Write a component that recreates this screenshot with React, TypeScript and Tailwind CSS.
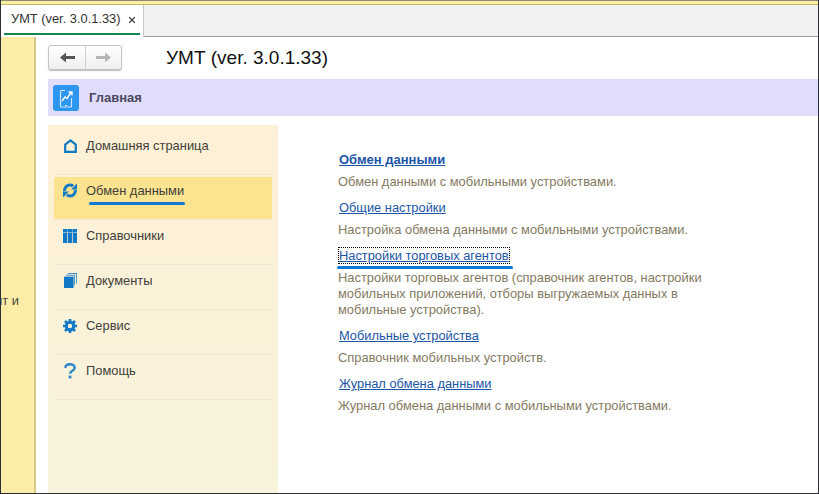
import { X } from 'lucide-react'

const menu = [
  { label: 'Домашняя страница', icon: <HomeIcon /> },
  { label: 'Обмен данными', icon: <SyncIcon />, active: true },
  { label: 'Справочники', icon: <TableIcon /> },
  { label: 'Документы', icon: <DocsIcon /> },
  { label: 'Сервис', icon: <GearIcon /> },
  { label: 'Помощь', icon: <HelpIcon /> },
]

function HomeIcon() {
  return (
    <svg width="13" height="14" viewBox="0 0 13 14" fill="none" stroke="#1279c6" strokeWidth="2.200">
      <path d="M1.200 12.800V5.600L6.500 1.400l5.300 4.200v7.200z" />
    </svg>
  )
}

function SyncIcon() {
  return (
    <svg width="14" height="15" viewBox="0 0 14 15" fill="none" stroke="#1279c6" strokeWidth="3">
      <path d="M1.700 8C1.300 4.500 3.800 2 7 2c1.300 0 2.300.4 3.100 1.100" />
      <path d="M12.300 7c.4 3.500-2.100 6-5.300 6-1.300 0-2.300-.4-3.100-1.100" />
      <path d="M8 6.500h6V.5z" fill="#1279c6" stroke="none" />
      <path d="M6 8.500H0v6z" fill="#1279c6" stroke="none" />
    </svg>
  )
}

function TableIcon() {
  return (
    <svg width="14" height="14" viewBox="0 0 14 14" fill="#1279c6">
      <path d="M0 0h14v3.400H0zM0 4h4.200v10H0zM4.900 4h4.200v10H4.900zM9.800 4H14v10H9.800z" />
      <path d="M4.200 0h.7v3.400h-.7zM9.100 0h.7v3.400h-.7z" fill="#7fb8e2" />
    </svg>
  )
}

function DocsIcon() {
  return (
    <svg width="13" height="15" viewBox="0 0 13 15" fill="#1279c6">
      <path d="M0 3.600h9.600V15H0z" />
      <path d="M2 1.800h9v10.400h-.7V2.500H2zM3.800 0H13v10.400h-.7V.7H3.800z" />
    </svg>
  )
}

function GearIcon() {
  return (
    <svg width="14" height="14" viewBox="0 0 14 14" fill="none" stroke="#1279c6">
      <circle cx="7" cy="7" r="3.700" strokeWidth="3" />
      <path d="M7 0v3M7 11v3M0 7h3M11 7h3M2 2l2 2M10 10l2 2M12 2l-2 2M4 10l-2 2" strokeWidth="2.700" />
    </svg>
  )
}

function HelpIcon() {
  return (
    <svg width="12" height="16" viewBox="0 0 12 16" fill="none" stroke="#2a86c8" strokeWidth="2.400">
      <path d="M1.300 4.800C1.500 2.600 3.500 1.300 6 1.300c2.700 0 4.700 1.400 4.700 3.400 0 3-4.700 2.900-4.700 6" />
      <path d="M4.700 12.600h2.700V15.400H4.700z" fill="#2a86c8" stroke="none" />
    </svg>
  )
}

function PhoneIcon() {
  return (
    <svg width="26" height="26" viewBox="0 0 26 26" className="rounded-[3px] bg-[#2c96f0]" fill="none" stroke="#cfe8ff" strokeWidth="1.200">
      <path d="M12 5.500H8.500a1 1 0 0 0-1 1V21a1 1 0 0 0 1 1h9a1 1 0 0 0 1-1v-8" />
      <path d="M9 16l3-4 2 1.500 4-6M15.500 7H19v3.500" strokeWidth="1.400" stroke="#fff" />
      <path d="M12 20.500h2" />
    </svg>
  )
}

function NavArrow({ color, flip }: { color: string; flip?: boolean }) {
  return (
    <svg width="15" height="11" viewBox="0 0 15 11" fill={color} className={flip ? 'rotate-180' : ''}>
      <path d="M0 5.500L6 .5v3.500h9v3H6v3.500z" />
    </svg>
  )
}

function DescLink({ title, bold, focus, children }: { title: string; bold?: boolean; focus?: boolean; children: string }) {
  return (
    <div>
      <div className="relative flex h-[19px] items-center">
        <a className={`ml-px leading-[15px] text-[#1c55a8] underline ${bold ? 'text-[13px] font-bold' : 'text-[12.85px]'} ${focus ? 'outline-1 outline-dotted outline-black' : ''}`}>
          {title}
        </a>
        {focus && <div className="absolute -left-px top-[20px] h-[3px] w-[176px] rounded-full bg-[#0f78d6]" />}
      </div>
      <p className="mt-[5px] text-[12.9px] leading-[16px] text-[#857a5f]">{children}</p>
    </div>
  )
}

export default function App() {
  return (
    <div className="flex h-[494px] w-[819px] flex-col overflow-hidden border-x border-b border-[#2c2f36] bg-white font-['Liberation_Sans',sans-serif]">
      <div className="h-[5px] shrink-0 border-t border-b border-t-[#8f8a6a] border-b-[#c9b865] bg-[#fbeea6]" />

      {/* Tabs */}
      <div className="flex h-[32px] shrink-0 border-b border-[#9a9a9a] bg-[#f1f1f1]">
        <div className="relative -mb-px flex w-[143px] shrink-0 items-center border-r border-[#c8c8c8] bg-white pb-[3px] pl-[10px]">
          <span className="text-[12.85px] leading-none text-[#333]">УМТ (ver. 3.0.1.33)</span>
          <X className="ml-[6px] h-[10px] w-[10px] text-[#444]" strokeWidth={3} />
          <div className="absolute bottom-[2px] left-[3px] h-[2px] w-[136px] bg-[#15874f]" />
        </div>
      </div>

      <div className="flex min-h-0 flex-1">
        {/* Left strip */}
        <div className="flex w-[35px] shrink-0 justify-end overflow-hidden border-r-2 border-[#d8c98a] bg-[#fbeda6] pt-[256px]">
          <span className="whitespace-nowrap pr-[15px] text-[12.9px] leading-[15px] text-[#4a4a3c]">нт и</span>
        </div>

        <div className="flex min-w-0 flex-1 flex-col pl-[12px]">
          {/* Top nav */}
          <div className="flex h-[42px] shrink-0 items-start pt-[8px]">
            <div className="flex h-[25px] w-[74px] rounded-[3px] border border-[#c4c4c4] bg-gradient-to-b from-white to-[#efefef] shadow-[0_1px_1px_#bbb]">
              <div className="flex w-[37px] items-center justify-center border-r border-[#cfcfcf]">
                <NavArrow color="#555555" />
              </div>
              <div className="flex flex-1 items-center justify-center">
                <NavArrow color="#b5b5b5" flip />
              </div>
            </div>
            <h1 className="ml-[44px] mt-[1px] text-[19px] leading-[24px] text-[#111]">УМТ (ver. 3.0.1.33)</h1>
          </div>

          {/* Section band */}
          <div className="flex h-[37px] shrink-0 items-center gap-[10px] bg-[#e0dcfb] pl-[5px]">
            <PhoneIcon />
            <span className="text-[13px] font-bold text-[#4a4a5c]">Главная</span>
          </div>

          <div className="mt-[9px] flex min-h-0 flex-1">
            {/* Sidebar */}
            <nav className="flex w-[230px] shrink-0 flex-col bg-gradient-to-b from-[#fdf0d6] to-[#f8f3dc] px-[6px] pt-[5px]">
              {menu.map((item) => (
                <div key={item.label} className="relative h-[45px] border-b border-[#f3e5d6]">
                  <div className={`flex h-[42px] items-center ${item.active ? 'mt-[2px] bg-[#fbe38f] pb-[15px]' : 'pb-[11px]'}`}>
                    <span className="flex w-[32px] shrink-0 justify-center">{item.icon}</span>
                    <span className="text-[12.9px] leading-[15px] text-[#41403a]">{item.label}</span>
                  </div>
                  {item.active && <div className="absolute left-[35px] top-[27px] h-[3px] w-[96px] rounded-full bg-[#1078d4]" />}
                </div>
              ))}
            </nav>

            {/* Content */}
            <main className="flex w-[430px] flex-col gap-[8px] pl-[60px] pt-[25px]">
              <DescLink title="Обмен данными" bold>Обмен данными с мобильными устройствами.</DescLink>
              <DescLink title="Общие настройки">Настройка обмена данными с мобильными устройствами.</DescLink>
              <DescLink title="Настройки торговых агентов" focus>
                Настройки торговых агентов (справочник агентов, настройки мобильных приложений, отборы выгружаемых данных в мобильные устройства).
              </DescLink>
              <DescLink title="Мобильные устройства">Справочник мобильных устройств.</DescLink>
              <DescLink title="Журнал обмена данными">Журнал обмена данными с мобильными устройствами.</DescLink>
            </main>
          </div>
        </div>
      </div>
    </div>
  )
}
